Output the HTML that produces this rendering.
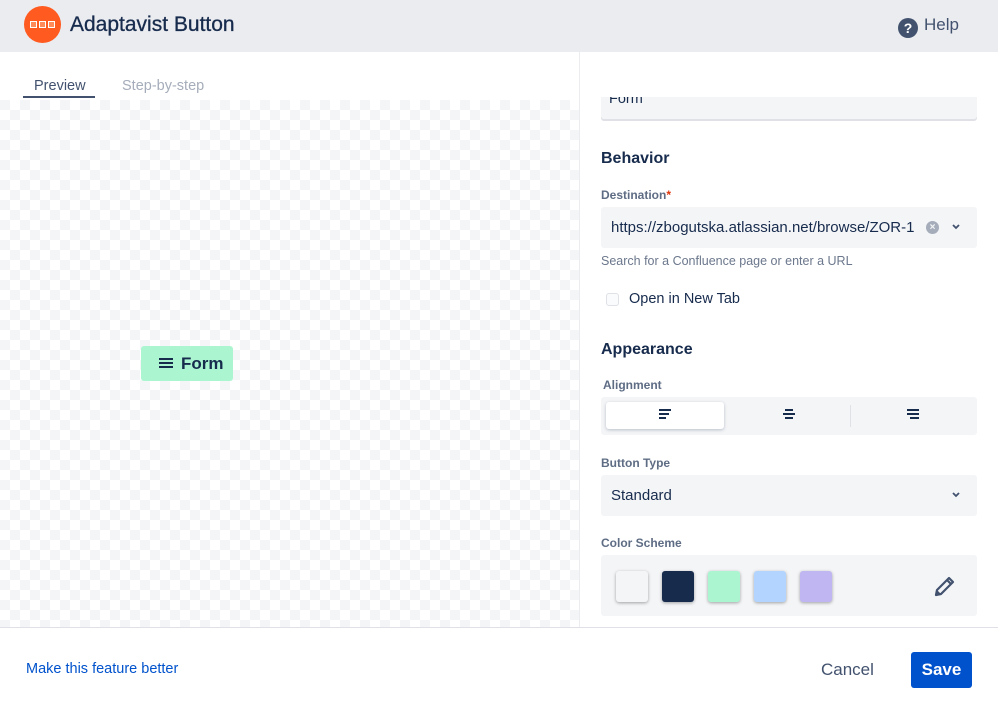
<!DOCTYPE html>
<html><head><style>
*{box-sizing:border-box;margin:0;padding:0}
body{width:998px;height:707px;overflow:hidden;font-family:"Liberation Sans",sans-serif;background:#fff;position:relative;color:#172b4d}
.hdr{position:absolute;left:0;top:0;width:998px;height:52px;background:#ebecf0}
.logo{position:absolute;left:24px;top:6px;width:37px;height:37px;border-radius:50%;background:#ff5a1f}
.logo i{position:absolute;top:15px;width:7px;height:7px;border:1px solid #fff;background:#ff8a5a}
.title{position:absolute;left:70px;top:13px;font-size:21px;color:#172b4d;-webkit-text-stroke:0.3px #172b4d}
.help{position:absolute;left:898px;top:15px;font-size:17px;color:#42526e}
.help b{display:inline-block;width:20px;height:20px;border-radius:50%;background:#42526e;color:#fff;font-size:14px;text-align:center;line-height:20px;margin-right:6px;vertical-align:-3px}
.tab{position:absolute;top:78px;font-size:14.5px}
.prev{position:absolute;left:0;top:100px;width:580px;height:527px;
background-color:#fff;background-image:linear-gradient(45deg,#f4f5f7 25%,transparent 25%,transparent 75%,#f4f5f7 75%),linear-gradient(45deg,#f4f5f7 25%,transparent 25%,transparent 75%,#f4f5f7 75%);background-size:20px 20px;background-position:10px 0,20px 10px}
.vline{position:absolute;left:579px;top:52px;width:1px;height:576px;background:#ebecf0}
.btn{position:absolute;left:141px;top:346px;width:92px;height:35px;background:#abf5d1;border-radius:3px;font-size:17px;font-weight:bold;line-height:35px;padding-left:40px}
.btn span{position:absolute;left:18px;top:12px;width:14px;height:2px;background:#172b4d;box-shadow:0 4px 0 #172b4d,0 8px 0 #172b4d}
.field{position:absolute;left:601px;width:376px;background:#f4f5f7;border-radius:3px}
.lbl{position:absolute;left:601px;font-size:12px;font-weight:bold;color:#5e6c84}
.h{position:absolute;left:601px;font-size:16px;font-weight:bold}
.sw{position:absolute;top:571px;width:32px;height:31px;border-radius:3px;box-shadow:0 1px 3px rgba(0,0,0,.35)}
.foot{position:absolute;left:0;top:627px;width:998px;height:80px;border-top:1px solid #dfe1e6;background:#fff}
.al{position:absolute;top:409px;width:12px;height:2px;background:#172b4d}
</style></head><body>
<div class="hdr">
 <div class="logo"><i style="left:6px"></i><i style="left:15px"></i><i style="left:24px"></i></div>
 <div class="title">Adaptavist Button</div>
 <div class="help"><b>?</b>Help</div>
</div>
<div class="tab" style="left:34px;color:#42526e">Preview</div>
<div style="position:absolute;left:23px;top:96px;width:72px;height:2px;background:#42526e"></div>
<div class="tab" style="left:122px;color:#a5adba">Step-by-step</div>
<div class="prev"></div>
<div class="vline"></div>
<div class="btn"><span></span>Form</div>

<div class="field" style="top:90px;height:29px;background:#f4f5f7;box-shadow:0 2px 0 #dfe1e6;border-radius:0 0 3px 3px"></div>
<div style="position:absolute;left:609px;top:91px;font-size:14.5px;color:#172b4d">Form</div>
<div style="position:absolute;left:580px;top:52px;width:418px;height:45px;background:#fff"></div>
<div class="h" style="top:150px">Behavior</div>
<div class="lbl" style="top:188px">Destination<span style="color:#de350b">*</span></div>
<div class="field" style="top:207px;height:41px"></div>
<div style="position:absolute;left:611px;top:219px;font-size:15px">https://zbogutska.atlassian.net/browse/ZOR-1</div>
<div style="position:absolute;left:926px;top:221px;width:13px;height:13px;border-radius:50%;background:#a5adba;color:#f4f5f7;font-size:10px;line-height:13px;text-align:center;font-weight:bold">×</div>
<svg style="position:absolute;left:951px;top:223px" width="10" height="8"><path d="M2 2l3 3 3-3" stroke="#42526e" stroke-width="1.8" fill="none"/></svg>
<div style="position:absolute;left:601px;top:254px;font-size:12.5px;color:#6b778c">Search for a Confluence page or enter a URL</div>
<div style="position:absolute;left:606px;top:293px;width:13px;height:13px;border:1.5px solid #dfe1e6;border-radius:3px;background:#fafbfc"></div>
<div style="position:absolute;left:629px;top:291px;font-size:14.5px">Open in New Tab</div>
<div class="h" style="top:341px">Appearance</div>
<div class="lbl" style="top:378px;left:603px">Alignment</div>
<div class="field" style="top:397px;height:38px"></div>
<div style="position:absolute;left:606px;top:402px;width:118px;height:27px;background:#fff;border-radius:3px;box-shadow:0 1px 3px rgba(9,30,66,.25)"></div>
<div style="position:absolute;left:850px;top:405px;width:1px;height:22px;background:#dfe1e6"></div>
<div class="al" style="left:659px;top:409px"></div><div class="al" style="left:659px;top:413px;width:10px"></div><div class="al" style="left:659px;top:417px;width:7px"></div>
<div class="al" style="left:785px;top:409px;width:8px"></div><div class="al" style="left:783px;top:413px"></div><div class="al" style="left:785px;top:417px;width:8px"></div>
<div class="al" style="left:907px;top:409px"></div><div class="al" style="left:907px;top:413px"></div><div class="al" style="left:910px;top:417px;width:9px"></div>
<div class="lbl" style="top:456px">Button Type</div>
<div class="field" style="top:475px;height:41px"></div>
<div style="position:absolute;left:611px;top:487px;font-size:15px">Standard</div>
<svg style="position:absolute;left:951px;top:491px" width="10" height="8"><path d="M2 2l3 3 3-3" stroke="#42526e" stroke-width="1.8" fill="none"/></svg>
<div class="lbl" style="top:536px">Color Scheme</div>
<div class="field" style="top:555px;height:61px"></div>
<div class="sw" style="left:616px;background:#f4f5f7"></div>
<div class="sw" style="left:662px;background:#172b4d"></div>
<div class="sw" style="left:708px;background:#abf5d1"></div>
<div class="sw" style="left:754px;background:#b3d4ff"></div>
<div class="sw" style="left:800px;background:#c0b6f2"></div>
<svg style="position:absolute;left:933px;top:574px" width="24" height="24"><path d="M3 21l1-5L16 4l4 4L8 20z M14 6l4 4" stroke="#42526e" stroke-width="2.2" fill="none" stroke-linejoin="round"/><path d="M3 21l1-5 4 4z" fill="#42526e"/></svg>
<div class="foot">
 <div style="position:absolute;left:26px;top:33px;font-size:14.5px;color:#0052cc">Make this feature better</div>
 <div style="position:absolute;left:821px;top:32px;font-size:17px;color:#42526e">Cancel</div>
 <div style="position:absolute;left:911px;top:24px;width:61px;height:36px;background:#0052cc;border-radius:3px;color:#fff;font-size:17px;font-weight:bold;text-align:center;line-height:36px">Save</div>
</div>
</body></html>
